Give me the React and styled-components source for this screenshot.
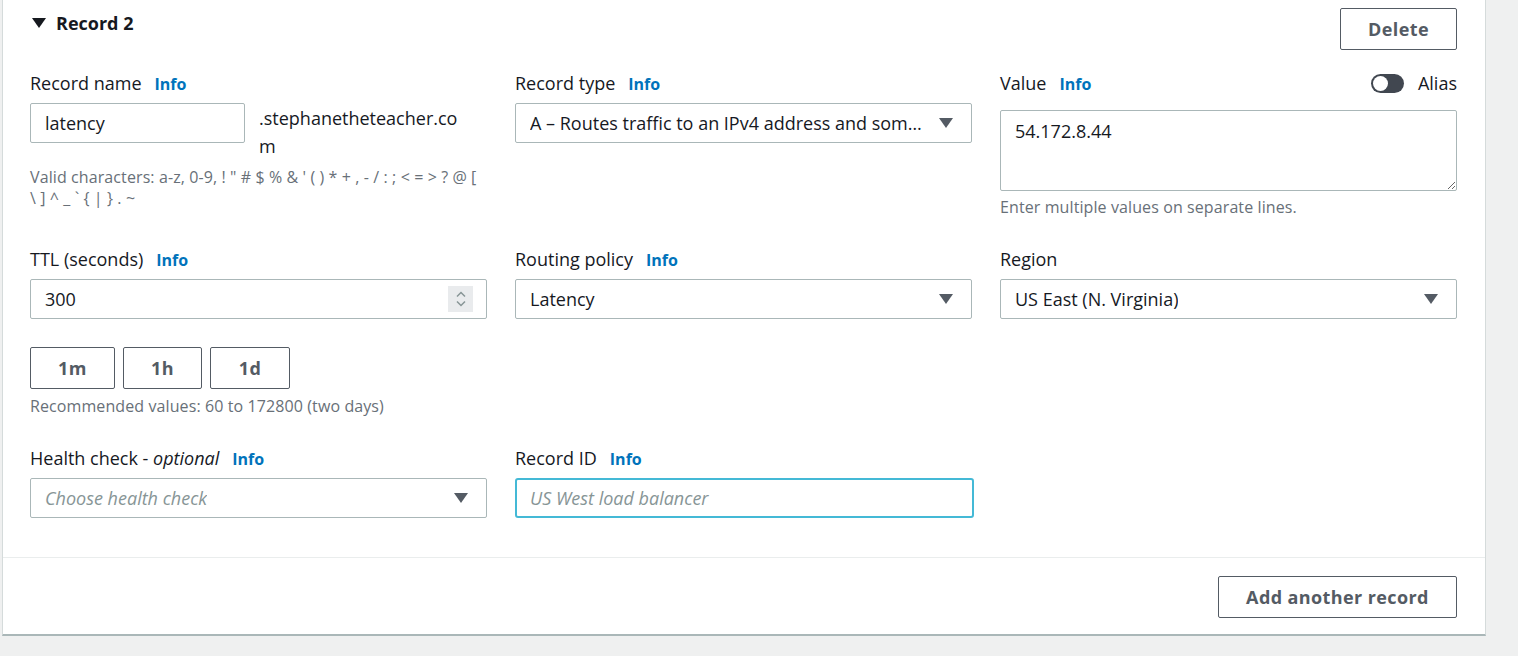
import React from "react";
import styled, { createGlobalStyle } from "styled-components";

const GlobalStyle = createGlobalStyle`
  body {
    margin: 0;
    background: #eff0f0;
    font-family: "Open Sans", "Noto Sans", sans-serif;
    color: #16191f;
  }
`;

const VALID_CHARS =
  "Valid characters: a-z, 0-9, ! \" # $ % & ' ( ) * + , - / : ; < = > ? @ [ \\ ] ^ _ ` { | } . ~";

const Card = styled.div`
  width: 1484px;
  margin-left: 2px;
  background: #fff;
  border-left: 1px solid #d5dbdb;
  border-right: 1px solid #d5dbdb;
  border-bottom: 2px solid #aab7b8;
  box-sizing: border-box;
`;

const Header = styled.div`
  display: flex;
  justify-content: space-between;
  align-items: flex-start;
  padding: 8px 28px 0 27px;
`;

const Title = styled.div`
  display: flex;
  align-items: center;
  gap: 10px;
  margin-top: 2px;
  font-size: 18px;
  font-weight: 700;
  line-height: 26px;
`;

const Caret = styled.span`
  width: 0;
  height: 0;
  border-left: 7px solid transparent;
  border-right: 7px solid transparent;
  border-top: 10px solid #16191f;
  margin-left: 2px;
`;

const Button = styled.button`
  height: 42px;
  width: ${(p) => p.$w}px;
  background: #fff;
  border: 1px solid #545b64;
  border-radius: 2px;
  font-family: inherit;
  font-size: 18px;
  font-weight: 700;
  letter-spacing: 0.4px;
  color: #545b64;
  cursor: pointer;
  padding: 0;
`;

const Grid = styled.div`
  display: grid;
  grid-template-columns: repeat(3, 457px);
  column-gap: 28px;
  row-gap: 30px;
  align-items: start;
  padding: 22px 28px 39px 27px;
  border-bottom: 1px solid #eaeded;
`;

const Field = styled.div`
  display: flex;
  flex-direction: column;
`;

const LabelRow = styled.div`
  display: flex;
  align-items: center;
  justify-content: space-between;
  height: 22px;
  margin-bottom: ${(p) => p.$gap || 9}px;
`;

const Label = styled.label`
  font-size: 18px;
  line-height: 22px;
  color: #16191f;
  em {
    font-style: italic;
  }
`;

const Info = styled.a`
  margin-left: 13px;
  font-size: 16px;
  font-weight: 700;
  color: #0073bb;
  text-decoration: none;
`;

const NameRow = styled.div`
  display: flex;
  align-items: flex-start;
  gap: 14px;
`;

const Suffix = styled.div`
  width: 208px;
  padding-top: 1px;
  font-size: 18px;
  line-height: 28px;
  word-break: break-all;
`;

const Input = styled.input`
  box-sizing: border-box;
  width: ${(p) => (p.$w ? `${p.$w}px` : "100%")};
  height: 40px;
  padding: 0 14px;
  border: 1px solid #aab7b8;
  border-radius: 2px;
  font-family: inherit;
  font-size: 18px;
  color: #16191f;
  outline: none;
  &::placeholder {
    color: #879596;
    font-style: italic;
  }
  &:focus {
    border: 2px solid #44b9d6;
    border-radius: 3px;
    padding: 0 13px;
  }
`;

const NumberBox = styled.div`
  position: relative;
`;

const Spinner = styled.span`
  position: absolute;
  right: 14px;
  top: 7px;
  width: 25px;
  height: 26px;
  background: #e9ebed;
  display: flex;
  align-items: center;
  justify-content: center;
`;

const Select = styled.div`
  box-sizing: border-box;
  height: 40px;
  display: flex;
  align-items: center;
  justify-content: space-between;
  padding: 0 18px 0 14px;
  border: 1px solid #aab7b8;
  border-radius: 2px;
  font-size: 18px;
  color: ${(p) => (p.$placeholder ? "#879596" : "#16191f")};
  font-style: ${(p) => (p.$placeholder ? "italic" : "normal")};
  span {
    white-space: nowrap;
    overflow: hidden;
    text-overflow: ellipsis;
  }
`;

const Arrow = styled.i`
  flex: none;
  margin-left: 16px;
  width: 0;
  height: 0;
  border-left: 7px solid transparent;
  border-right: 7px solid transparent;
  border-top: 10px solid #545b64;
`;

const TextArea = styled.textarea`
  box-sizing: border-box;
  width: 100%;
  height: 81px;
  padding: 8px 14px;
  border: 1px solid #aab7b8;
  border-radius: 2px;
  font-family: inherit;
  font-size: 18px;
  color: #16191f;
  resize: vertical;
  outline: none;
`;

const Hint = styled.div`
  max-width: ${(p) => (p.$max ? `${p.$max}px` : "none")};
  margin-top: ${(p) => p.$top || 8}px;
  font-size: 16px;
  line-height: 21px;
  letter-spacing: 0.1px;
  color: #687078;
`;

const Toggle = styled.div`
  display: flex;
  align-items: center;
  gap: 14px;
  font-size: 18px;
`;

const Track = styled.span`
  position: relative;
  width: 33px;
  height: 19px;
  border-radius: 10px;
  background: #414750;
  &::after {
    content: "";
    position: absolute;
    left: 2px;
    top: 2px;
    width: 15px;
    height: 15px;
    border-radius: 50%;
    background: #fff;
  }
`;

const Quick = styled.div`
  display: flex;
  gap: 8px;
  margin-top: 28px;
`;

const Footer = styled.div`
  display: flex;
  justify-content: flex-end;
  padding: 18px 28px 16px;
`;

const FieldLabel = ({ children, info = true, gap, right }) => (
  <LabelRow $gap={gap}>
    <Label>
      {children}
      {info && <Info>Info</Info>}
    </Label>
    {right}
  </LabelRow>
);

export default function App() {
  return (
    <>
      <GlobalStyle />
      <Card>
        <Header>
          <Title>
            <Caret />
            Record 2
          </Title>
          <Button $w={117}>Delete</Button>
        </Header>

        <Grid>
          <Field>
            <FieldLabel>Record name</FieldLabel>
            <NameRow>
              <Input $w={215} defaultValue="latency" />
              <Suffix>.stephanetheteacher.com</Suffix>
            </NameRow>
            <Hint $top={7} $max={451}>{VALID_CHARS}</Hint>
          </Field>

          <Field>
            <FieldLabel>Record type</FieldLabel>
            <Select>
              <span>A – Routes traffic to an IPv4 address and some AWS resources</span>
              <Arrow />
            </Select>
          </Field>

          <Field>
            <FieldLabel
              gap={16}
              right={
                <Toggle>
                  <Track />
                  Alias
                </Toggle>
              }
            >
              Value
            </FieldLabel>
            <TextArea defaultValue="54.172.8.44" />
            <Hint $top={6}>Enter multiple values on separate lines.</Hint>
          </Field>

          <Field>
            <FieldLabel>TTL (seconds)</FieldLabel>
            <NumberBox>
              <Input defaultValue="300" />
              <Spinner>
                <svg width="12" height="18" viewBox="0 0 12 18" fill="none" stroke="#879596" strokeWidth="1.5">
                  <path d="M2 6.5 6 2.5 10 6.5" />
                  <path d="M2 11.5 6 15.5 10 11.5" />
                </svg>
              </Spinner>
            </NumberBox>
            <Quick>
              <Button $w={85}>1m</Button>
              <Button $w={79}>1h</Button>
              <Button $w={80}>1d</Button>
            </Quick>
            <Hint $top={7}>Recommended values: 60 to 172800 (two days)</Hint>
          </Field>

          <Field>
            <FieldLabel>Routing policy</FieldLabel>
            <Select>
              <span>Latency</span>
              <Arrow />
            </Select>
          </Field>

          <Field>
            <FieldLabel info={false}>Region</FieldLabel>
            <Select>
              <span>US East (N. Virginia)</span>
              <Arrow />
            </Select>
          </Field>

          <Field>
            <FieldLabel>
              Health check - <em>optional</em>
            </FieldLabel>
            <Select $placeholder>
              <span>Choose health check</span>
              <Arrow />
            </Select>
          </Field>

          <Field>
            <FieldLabel>Record ID</FieldLabel>
            <Input $w={459} autoFocus placeholder="US West load balancer" />
          </Field>
        </Grid>

        <Footer>
          <Button $w={239}>Add another record</Button>
        </Footer>
      </Card>
    </>
  );
}
